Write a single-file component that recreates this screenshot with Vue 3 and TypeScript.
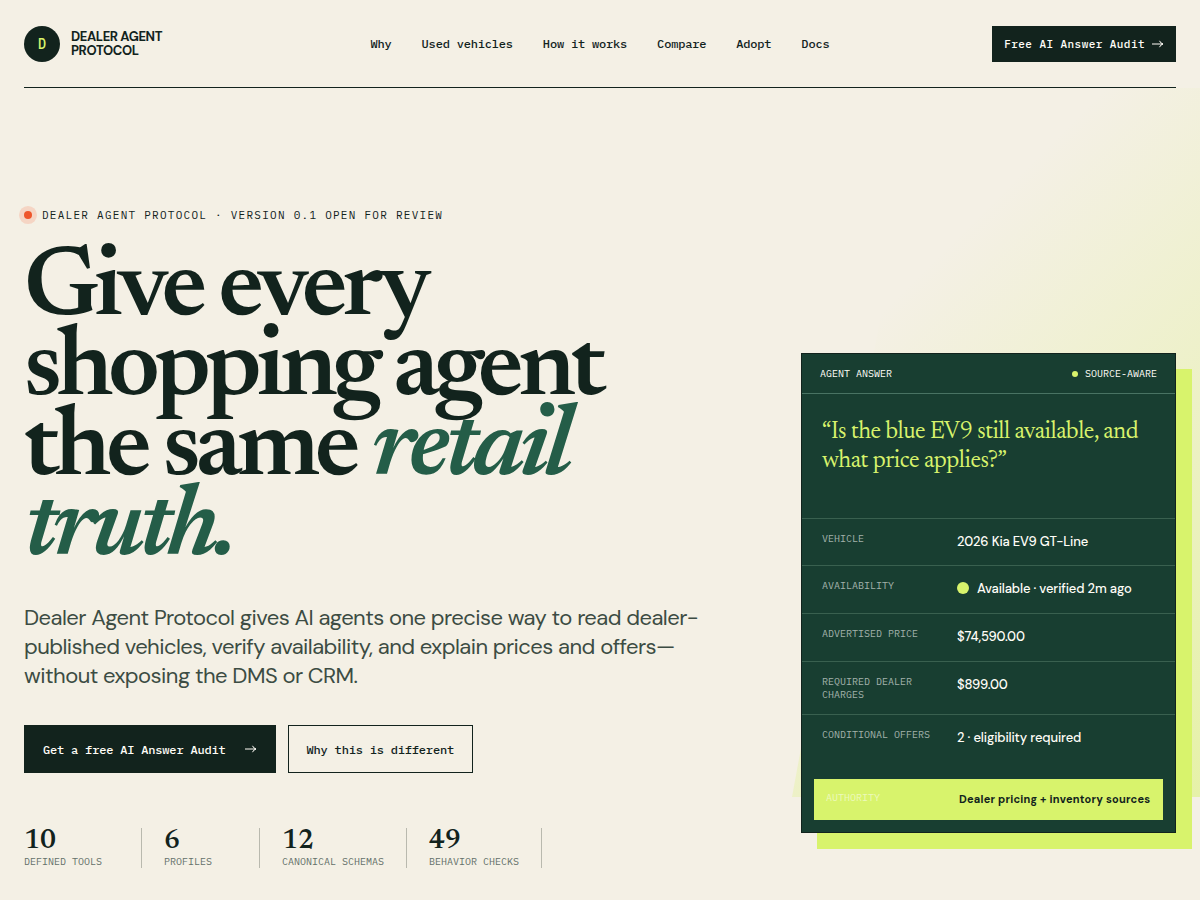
<script setup lang="ts">
interface Stat { value: string; label: string }
interface Fact { label: string; value: string; live?: boolean }

const links: string[] = ['Why', 'Used vehicles', 'How it works', 'Compare', 'Adopt', 'Docs']
const stats: Stat[] = [
  { value: '10', label: 'Defined tools' },
  { value: '6', label: 'Profiles' },
  { value: '12', label: 'Canonical schemas' },
  { value: '49', label: 'Behavior checks' },
]
const facts: Fact[] = [
  { label: 'Vehicle', value: '2026 Kia EV9 GT-Line' },
  { label: 'Availability', value: 'Available · verified 2m ago', live: true },
  { label: 'Advertised price', value: '$74,590.00' },
  { label: 'Required dealer charges', value: '$899.00' },
  { label: 'Conditional offers', value: '2 · eligibility required' },
]
</script>

<template>
  <div class="page">
    <header class="header">
      <a class="brand" href="#">
        <span class="mark">D</span>
        <span class="brand-name">DEALER AGENT<br />PROTOCOL</span>
      </a>
      <nav class="nav" aria-label="Main">
        <a v-for="link in links" :key="link" href="#">{{ link }}</a>
      </nav>
      <a class="audit" href="#">
        <span>Free AI Answer Audit</span>
        <svg class="arrow" viewBox="0 0 12 10" aria-hidden="true"><path d="M0 5H11M7.500 1.800Q8.500 4.300 11 5Q8.500 5.700 7.500 8.200" /></svg>
      </a>
    </header>

    <main class="hero">
      <div class="glow" aria-hidden="true"></div>
      <section class="copy">
        <p class="eyebrow"><i class="pulse"></i>Dealer Agent Protocol · Version 0.1 open for review</p>
        <h1>Give every<br />shopping agent<br />the same <em>retail<br />truth.</em></h1>
        <p class="lead">
          Dealer Agent Protocol gives AI agents one precise way to read dealer-<br />published vehicles,
          verify availability, and explain prices and offers—<br />without exposing the DMS or CRM.
        </p>
        <div class="actions">
          <a class="button primary" href="#">
            <span>Get a free AI Answer Audit</span>
            <svg class="arrow" viewBox="0 0 12 10" aria-hidden="true"><path d="M0 5H11M7.500 1.800Q8.500 4.300 11 5Q8.500 5.700 7.500 8.200" /></svg>
          </a>
          <a class="button" href="#">Why this is different</a>
        </div>
        <ul class="stats">
          <li v-for="stat in stats" :key="stat.label">
            <strong>{{ stat.value }}</strong>
            <span>{{ stat.label }}</span>
          </li>
        </ul>
      </section>

      <aside class="card">
        <div class="card-head">
          <span>Agent answer</span>
          <span class="source"><i></i>Source-aware</span>
        </div>
        <p class="question">“Is the blue EV9 still available, and what price applies?”</p>
        <dl class="facts">
          <div v-for="fact in facts" :key="fact.label" class="fact">
            <dt>{{ fact.label }}</dt>
            <dd><i v-if="fact.live"></i>{{ fact.value }}</dd>
          </div>
        </dl>
        <dl class="authority">
          <dt>Authority</dt>
          <dd>Dealer pricing + inventory sources</dd>
        </dl>
      </aside>
    </main>
  </div>
</template>

<style>
body {
  margin: 0;
  background: #f4f0e5;
}
</style>

<style scoped>
.page {
  --ink: #12231d;
  --green: #183e31;
  --lime: #d8f36c;
  --mono: "IBM Plex Mono", "Liberation Mono", monospace;
  --sans: "DM Sans", Inter, sans-serif;
  --serif: Newsreader, "Liberation Serif", serif;
  min-height: 100vh;
  color: var(--ink);
  background: #f4f0e5;
  font-family: var(--sans);
  overflow: hidden;
}
.page * { box-sizing: border-box; }
a { color: inherit; text-decoration: none; }
p, h1, dl, dd, ul { margin: 0; padding: 0; }

.header {
  display: grid;
  grid-template-columns: 1fr auto 1fr;
  align-items: center;
  height: 88px;
  margin: 0 24px;
  border-bottom: 1px solid var(--ink);
}
.brand { display: flex; align-items: center; gap: 11px; }
.mark {
  display: grid;
  place-items: center;
  width: 36px;
  height: 36px;
  border-radius: 50%;
  background: var(--ink);
  color: var(--lime);
  font: 500 14px var(--mono);
}
.brand-name { font-size: 13px; line-height: 14px; font-weight: 700; letter-spacing: -0.03em; }
.nav { display: flex; gap: 30px; font: 500 12px/16px var(--mono); letter-spacing: -0.015em; }
.audit {
  justify-self: end;
  display: flex;
  align-items: center;
  gap: 7px;
  height: 36px;
  padding: 1px 12px 0;
  background: var(--ink);
  color: #fffdf7;
  font: 500 11px var(--mono);
  letter-spacing: 0.04em;
}
.arrow { width: 12px; height: 10px; fill: none; stroke: currentColor; stroke-width: 1; }

.hero {
  position: relative;
  display: grid;
  grid-template-columns: minmax(0, 1fr) 375px;
  gap: 80px;
  padding: 118px 24px 32px;
}
.glow {
  position: absolute;
  inset: 0 0 103px 66%;
  clip-path: polygon(32% 0, 100% 0, 100% 100%, 0 100%);
  background: linear-gradient(135deg, transparent 28%, var(--lime));
  opacity: 0.5;
}
.copy { position: relative; }
.eyebrow {
  display: flex;
  align-items: center;
  gap: 10px;
  font: 11px/18px var(--mono);
  letter-spacing: 0.115em;
  text-transform: uppercase;
}
.pulse {
  width: 8px;
  height: 8px;
  border-radius: 50%;
  background: #ee562b;
  box-shadow: 0 0 0 5px #f5d5c4;
}
h1 {
  margin-top: 27px;
  font: 600 100px/80px var(--serif);
  letter-spacing: -0.05em;
}
h1 em { color: #245d48; font-style: italic; }
.lead {
  margin-top: 32px;
  color: #3c4c43;
  font-size: 22px;
  line-height: 29px;
  letter-spacing: -0.025em;
}
.actions { display: flex; gap: 12px; margin-top: 35px; }
.button {
  display: flex;
  align-items: center;
  gap: 19px;
  height: 48px;
  padding: 0 18px;
  border: 1px solid var(--ink);
  font: 500 12px var(--mono);
  letter-spacing: -0.015em;
}
.primary { background: var(--ink); color: #fffdf7; }
.stats { display: flex; margin-top: 55px; list-style: none; }
.stats li {
  min-width: 118px;
  height: 40px;
  padding: 0 22px;
  border-right: 1px solid #b9b9ae;
}
.stats li:first-child { padding-left: 0; }
.stats strong { display: block; font: 600 27px/27px var(--serif); }
.stats span {
  display: block;
  color: #64706a;
  font: 10px/13px var(--mono);
  text-transform: uppercase;
}

.card {
  position: relative;
  align-self: start;
  margin-top: 147px;
  border: 1px solid var(--ink);
  background: var(--green);
  color: #fffdf7;
  box-shadow: 16px 16px 0 var(--lime);
}
.card-head {
  display: flex;
  justify-content: space-between;
  padding: 13px 18px;
  border-bottom: 1px solid #497363;
  font: 10px/13px var(--mono);
  text-transform: uppercase;
}
.source { display: flex; align-items: center; gap: 7px; }
.source i { width: 6px; height: 6px; border-radius: 50%; background: var(--lime); }
.question {
  min-height: 124px;
  padding: 24px 20px;
  color: var(--lime);
  font: 24px/29px var(--serif);
  letter-spacing: -0.02em;
}
.fact {
  display: grid;
  grid-template-columns: 115px 1fr;
  gap: 20px;
  min-height: 48px;
  padding: 13px 20px;
  border-top: 1px solid #39604f;
}
.fact:first-child { min-height: 47px; }
.facts dt, .authority dt {
  color: #a3b2ab;
  font: 10px/13px var(--mono);
  text-transform: uppercase;
}
.facts dd {
  display: flex;
  align-items: center;
  gap: 8px;
  height: 18px;
  font-size: 13px;
  font-weight: 500;
  letter-spacing: -0.01em;
}
.facts i { width: 12px; height: 12px; border-radius: 50%; background: var(--lime); }
.authority {
  display: grid;
  grid-template-columns: 115px 1fr;
  gap: 18px;
  margin: 17px 12px 12px;
  padding: 12px;
  background: var(--lime);
}
.authority dt { color: #edf9bc; }
.authority dd { color: var(--ink); font-size: 11px; line-height: 17px; font-weight: 700; letter-spacing: 0.02em; white-space: nowrap; }
</style>
